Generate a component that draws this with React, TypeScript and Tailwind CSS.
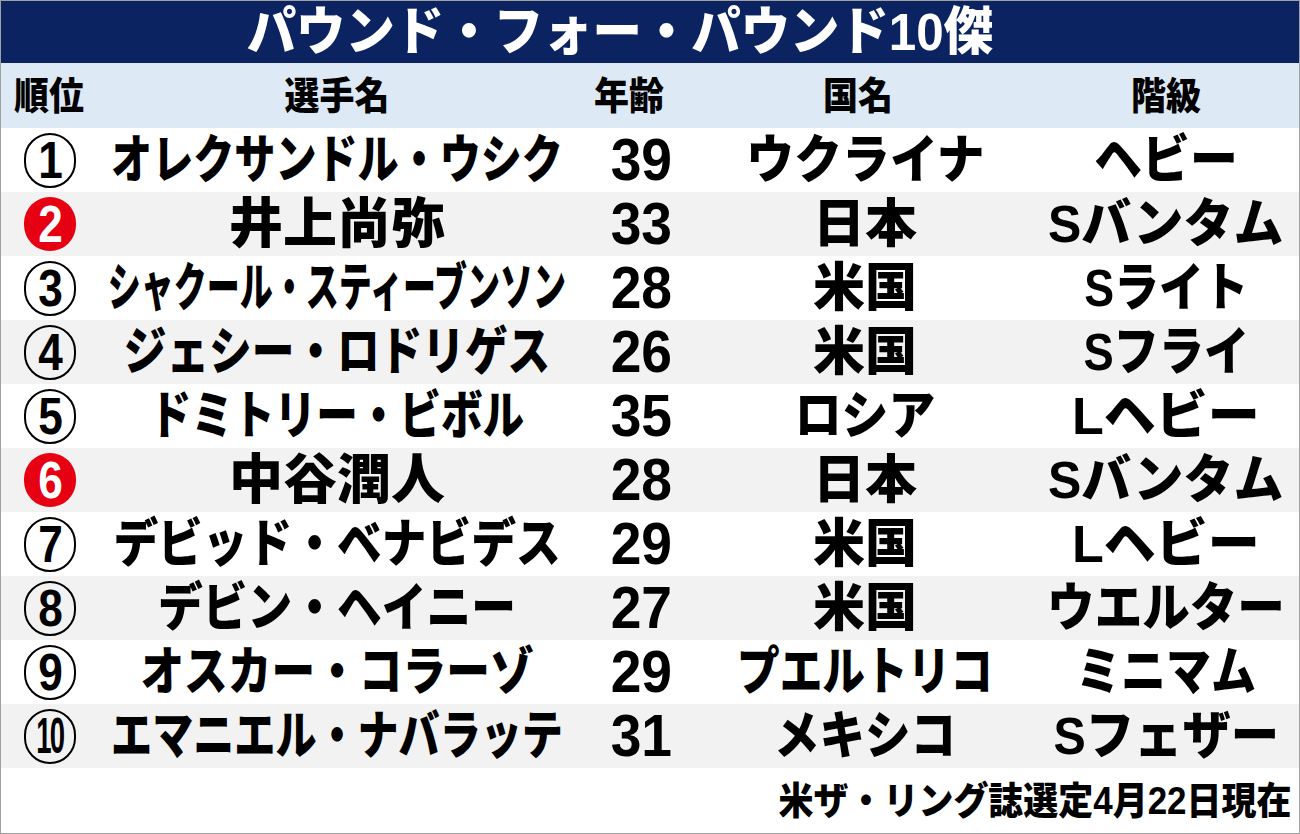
const jp = { fontFamily: '"Liberation Sans", "Noto Sans CJK JP", sans-serif' };

interface Row {
  rank: string;
  hot?: boolean;
  name: string;
  nameCls: string;
  age: string;
  country: string;
  countryCls: string;
  weight: string;
  weightCls: string;
}

const rows: Row[] = [
  { rank: "1", name: "オレクサンドル・ウシク", nameCls: "text-[52px] scale-x-[0.79]", age: "39", country: "ウクライナ", countryCls: "scale-x-[0.92]", weight: "ヘビー", weightCls: "scale-x-[0.92]" },
  { rank: "2", hot: true, name: "井上尚弥", nameCls: "text-[54px] scale-x-[1]", age: "33", country: "日本", countryCls: "scale-x-[1]", weight: "Sバンタム", weightCls: "scale-x-[0.96]" },
  { rank: "3", name: "シャクール・スティーブンソン", nameCls: "text-[52px] scale-x-[0.635]", age: "28", country: "米国", countryCls: "scale-x-[1]", weight: "Sライト", weightCls: "scale-x-[0.86]" },
  { rank: "4", name: "ジェシー・ロドリゲス", nameCls: "text-[52px] scale-x-[0.82]", age: "26", country: "米国", countryCls: "scale-x-[1]", weight: "Sフライ", weightCls: "scale-x-[0.87]" },
  { rank: "5", name: "ドミトリー・ビボル", nameCls: "text-[52px] scale-x-[0.8]", age: "35", country: "ロシア", countryCls: "scale-x-[0.9]", weight: "Lヘビー", weightCls: "scale-x-[1]" },
  { rank: "6", hot: true, name: "中谷潤人", nameCls: "text-[54px] scale-x-[1]", age: "28", country: "日本", countryCls: "scale-x-[1]", weight: "Sバンタム", weightCls: "scale-x-[0.96]" },
  { rank: "7", name: "デビッド・ベナビデス", nameCls: "text-[52px] scale-x-[0.86]", age: "29", country: "米国", countryCls: "scale-x-[1]", weight: "Lヘビー", weightCls: "scale-x-[1]" },
  { rank: "8", name: "デビン・ヘイニー", nameCls: "text-[52px] scale-x-[0.86]", age: "27", country: "米国", countryCls: "scale-x-[1]", weight: "ウエルター", weightCls: "scale-x-[0.915]" },
  { rank: "9", name: "オスカー・コラーゾ", nameCls: "text-[52px] scale-x-[0.84]", age: "29", country: "プエルトリコ", countryCls: "scale-x-[0.82]", weight: "ミニマム", weightCls: "scale-x-[0.865]" },
  { rank: "10", name: "エマニエル・ナバラッテ", nameCls: "text-[52px] scale-x-[0.79]", age: "31", country: "メキシコ", countryCls: "scale-x-[0.875]", weight: "Sフェザー", weightCls: "scale-x-[0.93]" },
];

const cols = "grid grid-cols-[96px_480px_128px_312px_282px]";

const RankMark = ({ rank, hot }: { rank: string; hot?: boolean }) => (
  <div
    className={
      hot
        ? "w-[52px] h-[54px] rounded-full bg-[#e60012] flex items-center justify-center"
        : "w-[52px] h-[55px] rounded-full border-2 border-black flex items-center justify-center"
    }
  >
    <span
      className={
        (hot ? "text-white " : "text-black ") +
        (rank === "10"
          ? "text-[50px] scale-x-[0.55] tracking-[-3px]"
          : "text-[52px] scale-x-[0.85]") +
        " inline-block font-bold leading-none"
      }
      style={{ fontFamily: '"Liberation Sans", sans-serif' }}
    >
      {rank}
    </span>
  </div>
);

export default function App() {
  return (
    <div
      className="w-[1300px] h-[834px] border border-[#a0a0a0] bg-white flex flex-col overflow-hidden"
      style={jp}
    >
      <div className="h-[62px] bg-[#0b2461] flex items-center justify-center pr-[60px]">
        <span className="inline-block text-white text-[52px] font-black leading-none scale-x-[0.95] whitespace-nowrap">
          パウンド・フォー・パウンド10傑
        </span>
      </div>

      <div className={`${cols} h-[65px] bg-[#dde9f5] items-center text-black font-black text-[38px] leading-none`}>
        <div className="flex justify-center">
          <span className="inline-block scale-x-[0.92]">順位</span>
        </div>
        <div className="flex justify-center">
          <span className="inline-block scale-x-[0.92]">選手名</span>
        </div>
        <div className="flex justify-center">
          <span className="inline-block scale-x-[0.92] mr-[24px]">年齢</span>
        </div>
        <div className="flex justify-center">
          <span className="inline-block scale-x-[0.92] mr-[6px]">国名</span>
        </div>
        <div className="flex justify-center pl-[16px]">
          <span className="inline-block scale-x-[0.92]">階級</span>
        </div>
      </div>

      {rows.map((r, i) => (
        <div
          key={r.rank}
          className={`${cols} h-16 items-center text-black font-black leading-none whitespace-nowrap ${
            i % 2 === 1 ? "bg-[#f2f2f2]" : "bg-white"
          }`}
        >
          <div className="flex justify-center pl-[2px]">
            <RankMark rank={r.rank} hot={r.hot} />
          </div>
          <div className="flex justify-center">
            <span className={`inline-block ${r.nameCls}`}>{r.name}</span>
          </div>
          <div className="flex justify-center">
            <span
              className="inline-block text-[60px] font-bold scale-x-[0.92]"
              style={{ fontFamily: '"Liberation Sans", sans-serif' }}
            >
              {r.age}
            </span>
          </div>
          <div className="flex justify-center pl-[8px]">
            <span className={`inline-block text-[52px] ${r.countryCls}`}>{r.country}</span>
          </div>
          <div className="flex justify-center pl-[16px]">
            <span className={`inline-block text-[52px] ${r.weightCls}`}>{r.weight}</span>
          </div>
        </div>
      ))}

      <div className="flex-1 flex items-center justify-end pr-[8px]">
        <span className="inline-block origin-right text-[38px] font-black leading-none scale-x-[0.92] whitespace-nowrap">
          米ザ・リング誌選定4月22日現在
        </span>
      </div>
    </div>
  );
}
